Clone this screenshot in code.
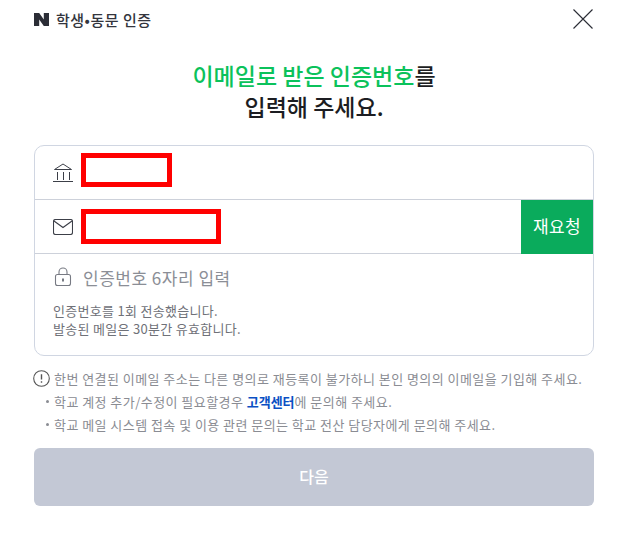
<div class="page">
	<header class="top">
		<div class="brand">
			<svg class="logo" width="15" height="13" viewBox="0 0 15 13"><path fill="#2b2d36" d="M0 0h5.200l4.600 6.400V0H15v13H9.800L5.200 6.600V13H0z" /></svg>
			<span>학생•동문 인증</span>
		</div>
		<button class="close" aria-label="닫기">
			<svg width="20" height="20" viewBox="0 0 20 20"><path d="M.5.5l19 19M19.500.5l-19 19" stroke="#2b2d36" stroke-width="1.100" fill="none" /></svg>
		</button>
	</header>

	<h1 class="title"><em>이메일로 받은 인증번호</em>를<br />입력해 주세요.</h1>

	<section class="card">
		<div class="row">
			<svg class="icon" width="20" height="20" viewBox="0 0 20 20" fill="none" stroke="#3c3f48" stroke-width="1">
				<path d="M1.500 6.500L10 1l8.500 5.500z" />
				<path d="M4.500 9v8M10.500 9v8M16.500 9v8M0 18.500h20" />
			</svg>
			<span class="mask mask--short"></span>
		</div>
		<div class="row">
			<svg class="icon" width="20" height="16" viewBox="0 0 20 16" fill="none" stroke="#3c3f48" stroke-width="1.100">
				<rect x=".5" y=".5" width="19" height="15" rx="2" />
				<path d="M1 2l9 6.500L19 2" />
			</svg>
			<span class="mask mask--long"></span>
			<button class="resend">재요청</button>
		</div>
		<div class="code">
			<div class="code__field">
				<svg class="icon" width="20" height="20" viewBox="0 0 20 20" fill="none" stroke="#777a83" stroke-width="1.100">
					<rect x="2.500" y="7.500" width="15" height="11" rx="2" />
					<path d="M6 7.500V5a4 4 0 0 1 8 0v2.500" />
					<path d="M10 11.500v3" stroke-width="2" />
				</svg>
				<span class="placeholder">인증번호 6자리 입력</span>
			</div>
			<p class="sent">인증번호를 1회 전송했습니다.<br />발송된 메일은 30분간 유효합니다.</p>
		</div>
	</section>

	<ul class="notes">
		<li class="notes__warn">
			<svg width="17" height="17" viewBox="0 0 17 17" fill="none" stroke="#555" stroke-width="1.100">
				<circle cx="8.500" cy="8.500" r="7.800" />
				<path d="M8.500 4.300v5.200M8.500 11.200v1.600" stroke-width="1.400" />
			</svg>
			<span>한번 연결된 이메일 주소는 다른 명의로 재등록이 불가하니 본인 명의의 이메일을 기입해 주세요.</span>
		</li>
		<li class="notes__dot"><span>학교 계정 추가/수정이 필요할경우 <a href="#help">고객센터</a>에 문의해 주세요.</span></li>
		<li class="notes__dot"><span>학교 메일 시스템 접속 및 이용 관련 문의는 학교 전산 담당자에게 문의해 주세요.</span></li>
	</ul>

	<button class="next">다음</button>
</div>

<style>
	:global(body) {
		background: #fff;
	}

	.page {
		width: 621px;
		height: 536px;
		box-sizing: border-box;
		padding: 0 27px 0 34px;
		font-family: "Noto Sans CJK KR", "Noto Sans", sans-serif;
		overflow: hidden;
	}

	.top {
		display: flex;
		align-items: center;
		justify-content: space-between;
		height: 38px;
	}

	.brand {
		display: flex;
		align-items: center;
		gap: 7px;
		font-size: 15px;
		letter-spacing: 0.5px;
		font-weight: 500;
		color: #33353d;
	}

	.close {
		padding: 0;
		margin-right: 1px;
		border: 0;
		background: none;
		display: flex;
	}

	.title {
		margin: 22px 0 0;
		height: 85px;
		text-align: center;
		font-size: 23px;
		line-height: 31px;
		font-weight: 500;
		color: #1c1d22;
	}

	.title em {
		font-style: normal;
		color: #0bc25b;
	}

	.card {
		width: 560px;
		box-sizing: border-box;
		border: 1px solid #d0d6e2;
		border-radius: 10px;
		overflow: hidden;
		height: 211px;
	}

	.row {
		display: flex;
		align-items: center;
		height: 54px;
		box-sizing: border-box;
		padding-left: 18px;
		border-bottom: 1px solid #cdd1da;
	}

	.row:first-child .mask {
		margin-bottom: 6px;
	}

	.icon {
		flex: none;
	}

	.mask {
		display: block;
		box-sizing: border-box;
		border: 5px solid #ff0000;
		margin-left: 8px;
	}

	.mask--short {
		width: 91px;
		height: 34px;
	}

	.mask--long {
		width: 140px;
		height: 35px;
	}

	.resend {
		margin-left: auto;
		align-self: stretch;
		width: 72px;
		margin-bottom: -1px;
		border: 0;
		padding: 0 0 3px;
		background: #0aab5c;
		color: #fff;
		font: inherit;
		font-size: 17px;
		letter-spacing: 0.4px;
	}

	.code {
		padding: 12px 18px 0;
	}

	.code__field {
		display: flex;
		align-items: center;
		gap: 10px;
		height: 22px;
		font-size: 17px;
		letter-spacing: 0.5px;
		color: #8b8e96;
	}

	.sent {
		margin: 14px 0 0;
		font-size: 13px;
		letter-spacing: 0.3px;
		line-height: 18px;
		color: #6f7178;
	}

	.notes {
		list-style: none;
		margin: 11px 0 0;
		padding: 0;
		font-size: 13px;
		letter-spacing: 0.45px;
		color: #8a8c93;
	}

	.notes li {
		display: flex;
		align-items: center;
		height: 23px;
		white-space: pre;
	}

	.notes__warn svg {
		margin: 0 4px 0 -1px;
		flex: none;
	}

	.notes__dot {
		padding-left: 20px;
		position: relative;
	}

	.notes__dot::before {
		content: "";
		position: absolute;
		left: 12px;
		top: 10px;
		width: 3px;
		height: 3px;
		border-radius: 50%;
		background: #8a8c93;
	}

	.notes a {
		color: #0a50c4;
		font-weight: 700;
		letter-spacing: 0;
		text-decoration: none;
	}

	.next {
		display: block;
		width: 560px;
		height: 58px;
		margin-top: 12px;
		border: 0;
		border-radius: 6px;
		padding: 0 0 2px;
		background: #c3c8d5;
		color: #fff;
		font: inherit;
		font-size: 16px;
		font-weight: 500;
	}
</style>
